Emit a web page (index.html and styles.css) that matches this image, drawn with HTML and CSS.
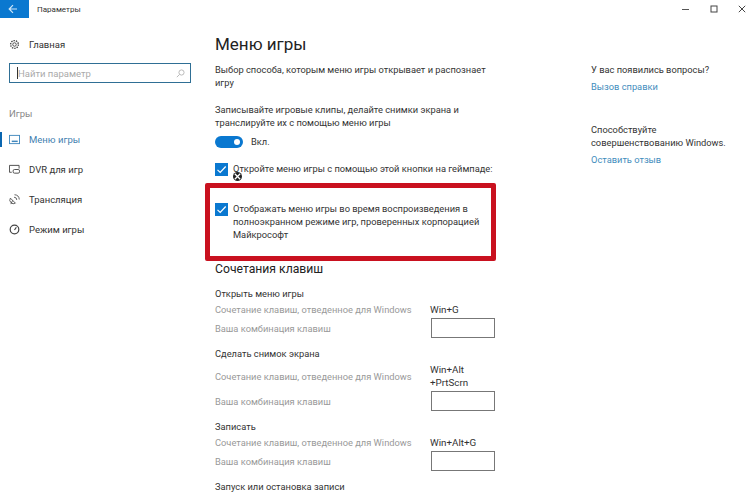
FILE: index.html
```html
<!DOCTYPE html>
<html lang="ru">
  <head>
    <meta charset="UTF-8" />
    <title>Параметры</title>
    <link rel="stylesheet" href="styles.css">
  </head>
  <body>
    <div class="window">
      <header class="titlebar">
        <div class="back">
          <svg width="10" height="10" viewBox="0 0 10 10"><path d="M9 5H1.500M5 1.200 1.200 5 5 8.800" fill="none" stroke="#cfe6f8" stroke-width="1.200"/></svg>
        </div>
        <span class="app-title">Параметры</span>
        <div class="controls">
          <svg width="8" height="8" viewBox="0 0 8 8"><path d="M0 4.500h7" stroke="#555" stroke-width="1"/></svg>
          <svg width="8" height="8" viewBox="0 0 8 8"><rect x="1" y="1" width="6" height="6" fill="none" stroke="#444" stroke-width="1"/></svg>
          <svg width="8" height="8" viewBox="0 0 8 8"><path d="M.8.8l6.400 6.400M7.200.8.800 7.200" stroke="#444" stroke-width="1"/></svg>
        </div>
      </header>

      <div class="columns">
        <nav class="sidebar">
          <a class="nav-item home">
            <svg class="nav-icon" viewBox="0 0 12 12"><circle cx="6" cy="6" r="1.900" fill="none" stroke="#444"/><circle cx="6" cy="6" r="4.200" fill="none" stroke="#444" stroke-width="1.500" stroke-dasharray="1.500 1.100"/></svg>
            Главная
          </a>
          <div class="search">
            <span class="caret"></span>
            <span class="placeholder">Найти параметр</span>
            <svg width="9" height="9" viewBox="0 0 9 9"><circle cx="5.500" cy="3.500" r="2.600" fill="none" stroke="#bbb"/><path d="M3.600 5.400.800 8.200" stroke="#bbb"/></svg>
          </div>
          <div class="nav-group">Игры</div>
          <a class="nav-item active">
            <svg class="nav-icon" viewBox="0 0 12 12"><rect x=".5" y="1.500" width="11" height="9" fill="none" stroke="#3f87bd"/><path d="M3 8h6.500" stroke="#3f87bd" stroke-width="1.600"/></svg>
            Меню игры
          </a>
          <a class="nav-item">
            <svg class="nav-icon" viewBox="0 0 12 12"><path d="M3 9H.5V1.500h10.500V5" fill="none" stroke="#444"/><rect x="4.500" y="6" width="7" height="4" rx="1.500" fill="none" stroke="#444"/></svg>
            DVR для игр
          </a>
          <a class="nav-item">
            <svg class="nav-icon" viewBox="0 0 12 12"><path d="M1.500 4.500a4 4 0 0 0 5.500 5.500zM4 7 2 11M5.500 3.500a3 3 0 0 1 3 3M6 .8a5.500 5.500 0 0 1 5.200 5.200" fill="none" stroke="#444" stroke-width=".9"/></svg>
            Трансляция
          </a>
          <a class="nav-item">
            <svg class="nav-icon" viewBox="0 0 12 12"><circle cx="6" cy="6" r="4.700" fill="none" stroke="#444" stroke-width="1.300"/><path d="M6 6.500 8 3.500" stroke="#444" stroke-width="1.300"/></svg>
            Режим игры
          </a>
        </nav>

        <main class="content">
          <h1>Меню игры</h1>
          <p class="lead">Выбор способа, которым меню игры открывает и распознает игру</p>
          <p class="lead">Записывайте игровые клипы, делайте снимки экрана и транслируйте их с помощью меню игры</p>
          <div class="toggle-row">
            <span class="toggle"><span class="knob"></span></span>
            <span>Вкл.</span>
          </div>
          <div class="check-row first">
            <span class="checkbox"><svg width="13" height="13" viewBox="0 0 13 13"><path d="M2.500 6.800 5.200 9.500 10.700 3.500" fill="none" stroke="#fff" stroke-width="1.200"/></svg></span>
            <div>
              Откройте меню игры с помощью этой кнопки на геймпаде:
              <svg class="xbox" width="9" height="9" viewBox="0 0 9 9"><circle cx="4.500" cy="4.500" r="4.500" fill="#222"/><path d="M1.800 1.800 7.200 7.200M7.200 1.800 1.800 7.200" stroke="#fff" stroke-width="1.300"/></svg>
            </div>
          </div>
          <div class="check-row second">
            <span class="checkbox"><svg width="13" height="13" viewBox="0 0 13 13"><path d="M2.500 6.800 5.200 9.500 10.700 3.500" fill="none" stroke="#fff" stroke-width="1.200"/></svg></span>
            <div>Отображать меню игры во время воспроизведения в полноэкранном режиме игр, проверенных корпорацией Майкрософт</div>
          </div>
          <div class="highlight"></div>

          <h2>Сочетания клавиш</h2>

          <h3>Открыть меню игры</h3>
          <div class="keys">
            <span class="muted">Сочетание клавиш, отведенное для Windows</span>
            <span class="key-value">Win+G</span>
            <span class="muted">Ваша комбинация клавиш</span>
            <span class="key-input"></span>
          </div>

          <h3>Сделать снимок экрана</h3>
          <div class="keys">
            <span class="muted">Сочетание клавиш, отведенное для Windows</span>
            <span class="key-value">Win+Alt<br>+PrtScrn</span>
            <span class="muted">Ваша комбинация клавиш</span>
            <span class="key-input"></span>
          </div>

          <h3>Записать</h3>
          <div class="keys">
            <span class="muted">Сочетание клавиш, отведенное для Windows</span>
            <span class="key-value">Win+Alt+G</span>
            <span class="muted">Ваша комбинация клавиш</span>
            <span class="key-input"></span>
          </div>

          <h3>Запуск или остановка записи</h3>
        </main>

        <aside class="help">
          <p>У вас появились вопросы?</p>
          <a>Вызов справки</a>
          <p class="feedback">Способствуйте совершенствованию Windows.</p>
          <a>Оставить отзыв</a>
        </aside>
      </div>
    </div>
  </body>
</html>
```

FILE: styles.css
```css
/* Reset */
* {
  margin: 0;
  padding: 0;
  box-sizing: border-box;
}

html,
body {
  height: 100%;
  overflow: hidden;
}

body {
  font-family: Roboto, "Noto Sans", sans-serif;
  font-size: 9.3px;
  line-height: 13px;
  color: #333;
  background: #fff;
}

.window {
  width: 751px;
  height: 498px;
  overflow: hidden;
}

/* Title bar */
.titlebar {
  display: flex;
  align-items: center;
  height: 18px;
}

.back {
  display: flex;
  align-items: center;
  justify-content: center;
  width: 29px;
  height: 18px;
  background: #0a78d0;
  padding-right: 3px;
}

.app-title {
  margin-left: 8px;
  font-size: 8px;
}

.controls {
  display: flex;
  gap: 20px;
  margin-left: auto;
  margin-right: 5px;
}

/* Columns */
.columns {
  display: grid;
  grid-template-columns: 215px 280px 1fr;
}

.sidebar {
  padding-top: 17px;
  font-size: 9.5px;
}

.nav-item {
  display: flex;
  align-items: center;
  gap: 9px;
  height: 30px;
  padding-left: 9px;
}

.nav-item.home {
  height: 18px;
}

.nav-item.active {
  color: #3f7fb0;
  background: linear-gradient(#0a66b0, #0a66b0) 0 50% / 2px 15px no-repeat;
}

.nav-icon {
  width: 11px;
  height: 11px;
  flex: none;
}

.search {
  display: flex;
  align-items: center;
  width: 182px;
  height: 20px;
  margin: 10px 0 0 9px;
  padding: 0 5px 0 7px;
  border: 1px solid #2f6f95;
}

.caret {
  width: 1px;
  height: 12px;
  background: #333;
}

.placeholder {
  flex: 1;
  color: #aaa;
}

.nav-group {
  margin-top: 24px;
  height: 17px;
  padding-left: 9px;
  color: #888;
}

/* Main column */
.content {
  position: relative;
  padding-top: 15px;
}

h1 {
  font-size: 17px;
  font-weight: 400;
  line-height: 22px;
  color: #222;
  margin-bottom: 8px;
}

.lead {
  width: 272px;
  margin-bottom: 14px;
}

.toggle-row {
  display: flex;
  align-items: center;
  gap: 8px;
  margin-top: -8px;
  height: 13px;
}

.toggle {
  display: flex;
  align-items: center;
  justify-content: flex-end;
  width: 28px;
  height: 12px;
  padding-right: 3px;
  border-radius: 6px;
  background: #0a78d0;
}

.knob {
  width: 6px;
  height: 6px;
  border-radius: 50%;
  background: #fff;
}

.check-row {
  display: flex;
  gap: 5px;
}

.check-row.first {
  margin-top: 14px;
  height: 27px;
}

.check-row.second {
  margin-top: 13px;
  width: 272px;
}

.checkbox {
  display: flex;
  width: 13px;
  height: 13px;
  flex: none;
  margin-top: 1px;
  background: #0a78d0;
}

.xbox {
  display: block;
  margin-top: -3px;
  margin-left: 0;
}

.highlight {
  position: absolute;
  left: -10px;
  top: 165px;
  width: 291px;
  height: 78px;
  border: 5px solid #c9111f;
  border-radius: 2px;
}

h2 {
  margin-top: 20px;
  font-size: 12.2px;
  font-weight: 400;
  line-height: 16px;
  color: #222;
}

h3 {
  margin-top: 9px;
  font-size: 9.3px;
  font-weight: 400;
  line-height: 13px;
}

h2 + h3 {
  margin-top: 10px;
}

.keys {
  display: grid;
  grid-template-columns: 215px 65px;
  align-items: center;
  row-gap: 2px;
  margin-top: 3px;
}

.key-value {
  font-size: 9.8px;
}

.muted {
  color: #999;
}

.key-input {
  display: block;
  width: 64px;
  height: 20px;
  margin-left: 1px;
  border: 1px solid #777;
}

/* Right column */
.help {
  padding: 45px 0 0 96px;
}

.help p {
  width: 150px;
}

.help a {
  display: block;
  margin-top: 4px;
  color: #3f8dbd;
}

.help .feedback {
  margin-top: 30px;
}
```
